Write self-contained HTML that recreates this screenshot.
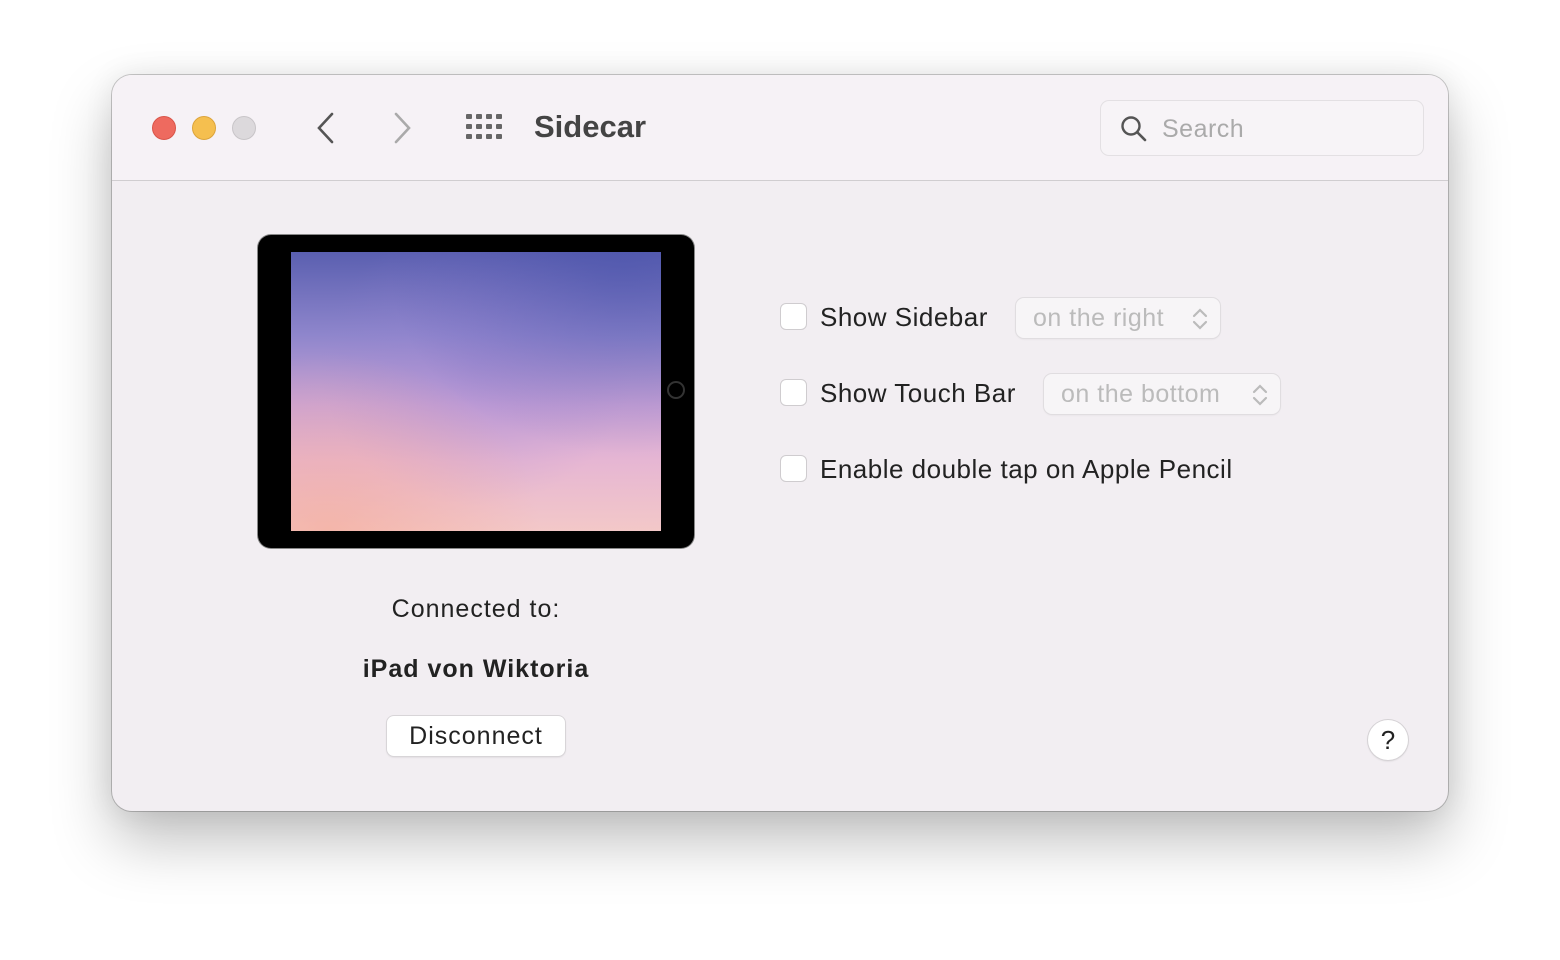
<!DOCTYPE html>
<html><head><style>
body{margin:0;width:1560px;height:960px;background:#fff;position:relative;overflow:hidden;font-family:"Liberation Sans",sans-serif;}
.win{position:absolute;left:112px;top:75px;width:1336px;height:736px;border-radius:20px;background:#f2eef2;box-shadow:0 30px 60px rgba(0,0,0,.25),0 0 30px rgba(0,0,0,.08),0 0 0 1px rgba(0,0,0,.2);overflow:hidden}
.tb{position:absolute;left:0;top:0;width:100%;height:105px;background:#f6f2f6;border-bottom:1px solid #d0cdd0}
.dot{position:absolute;top:41px;width:24px;height:24px;border-radius:50%;box-sizing:border-box}
.abs{position:absolute}
.cb{position:absolute;left:668px;width:27px;height:27px;border-radius:6px;background:#fff;border:1px solid #cfcccf;box-sizing:border-box}
.lbl{position:absolute;font-size:26px;color:#222;letter-spacing:.5px}
.pop{position:absolute;height:40px;border-radius:8px;background:#f7f5f7;box-shadow:0 0 0 1px #e0dde0,0 1px 2px rgba(0,0,0,.08);color:#bbb;font-size:25px;line-height:40px;padding-left:17px;box-sizing:border-box;letter-spacing:.5px}
</style></head><body>
<div class="win">
<div class="tb">
<div class="dot" style="left:40px;background:#ee6a5f;border:1px solid #d95549"></div>
<div class="dot" style="left:80px;background:#f5bf4f;border:1px solid #dca43b"></div>
<div class="dot" style="left:120px;background:#dcd9dc;border:1px solid #c8c5c8"></div>
<svg class="abs" style="left:202px;top:36px" width="24" height="34"><path d="M18 3 L5 17 L18 31" stroke="#555" stroke-width="2.6" fill="none" stroke-linecap="round"/></svg>
<svg class="abs" style="left:278px;top:36px" width="24" height="34"><path d="M6 3 L19 17 L6 31" stroke="#aaa" stroke-width="2.6" fill="none" stroke-linecap="round"/></svg>
<svg class="abs" style="left:354px;top:39px" width="38" height="28" fill="#666"><g>
<rect x="0" y="0" width="6" height="5" rx="1"/><rect x="10" y="0" width="6" height="5" rx="1"/><rect x="20" y="0" width="6" height="5" rx="1"/><rect x="30" y="0" width="6" height="5" rx="1"/>
<rect x="0" y="10" width="6" height="5" rx="1"/><rect x="10" y="10" width="6" height="5" rx="1"/><rect x="20" y="10" width="6" height="5" rx="1"/><rect x="30" y="10" width="6" height="5" rx="1"/>
<rect x="0" y="20" width="6" height="5" rx="1"/><rect x="10" y="20" width="6" height="5" rx="1"/><rect x="20" y="20" width="6" height="5" rx="1"/><rect x="30" y="20" width="6" height="5" rx="1"/></g></svg>
<div class="abs" style="left:422px;top:34px;font-size:31px;font-weight:bold;color:#444">Sidecar</div>
<div class="abs" style="left:989px;top:26px;width:322px;height:54px;border-radius:8px;background:#f7f4f7;box-shadow:0 0 0 1px #e3e0e3"></div>
<svg class="abs" style="left:1008px;top:40px" width="28" height="28"><circle cx="11" cy="11" r="8.5" stroke="#555" stroke-width="2.4" fill="none"/><path d="M17.5 17.5 L25 25" stroke="#555" stroke-width="2.6" stroke-linecap="round"/></svg>
<div class="abs" style="left:1050px;top:40px;font-size:25px;color:#aaa;letter-spacing:.5px">Search</div>
</div>
<div class="abs" style="left:146px;top:160px;width:436px;height:313px;background:#000;border-radius:13px;box-shadow:0 0 0 1px #888"></div>
<div class="abs" style="left:179px;top:177px;width:370px;height:279px;background:linear-gradient(180deg,#5a5fb0 0%,#8f86cc 30%,#c9a2d6 55%,#e6b6d3 75%,#f3c8c8 100%)">
<div style="position:absolute;inset:0;background:radial-gradient(ellipse at 10% 100%,rgba(245,170,150,.6),transparent 45%),radial-gradient(ellipse at 90% 5%,rgba(70,80,170,.45),transparent 50%),radial-gradient(ellipse at 50% 40%,rgba(150,130,210,.35),transparent 60%)"></div></div>
<div class="abs" style="left:555px;top:306px;width:18px;height:18px;border-radius:50%;border:2px solid #333;box-sizing:border-box"></div>
<div class="abs" style="left:146px;top:520px;width:436px;text-align:center;font-size:25px;color:#222;letter-spacing:1px">Connected to:</div>
<div class="abs" style="left:146px;top:580px;width:436px;text-align:center;font-size:25px;font-weight:bold;color:#222;letter-spacing:1px">iPad von Wiktoria</div>
<div class="abs" style="left:275px;top:641px;width:178px;height:40px;border-radius:7px;background:#fff;box-shadow:0 0 0 1px #d8d5d8,0 1px 2px rgba(0,0,0,.15);text-align:center;line-height:40px;font-size:25px;color:#222;letter-spacing:1px">Disconnect</div>
<div class="cb" style="top:228px"></div><div class="lbl" style="left:708px;top:227px">Show Sidebar</div>
<div class="pop" style="left:904px;top:223px;width:204px">on the right</div>
<div class="cb" style="top:304px"></div><div class="lbl" style="left:708px;top:303px">Show Touch Bar</div>
<div class="pop" style="left:932px;top:299px;width:236px">on the bottom</div>
<svg class="abs" style="left:1078px;top:230px" width="20" height="28"><path d="M4 11 L10 5 L16 11 M4 17 L10 23 L16 17" stroke="#bbb" stroke-width="2.2" fill="none" stroke-linecap="round"/></svg>
<svg class="abs" style="left:1138px;top:306px" width="20" height="28"><path d="M4 11 L10 5 L16 11 M4 17 L10 23 L16 17" stroke="#bbb" stroke-width="2.2" fill="none" stroke-linecap="round"/></svg>
<div class="cb" style="top:380px"></div><div class="lbl" style="left:708px;top:379px">Enable double tap on Apple Pencil</div>
<div class="abs" style="left:1256px;top:645px;width:40px;height:40px;border-radius:50%;background:#fff;box-shadow:0 0 0 1px #d5d2d5,0 1px 2px rgba(0,0,0,.15);text-align:center;line-height:40px;font-size:26px;color:#222">?</div>
</div>
</body></html>
